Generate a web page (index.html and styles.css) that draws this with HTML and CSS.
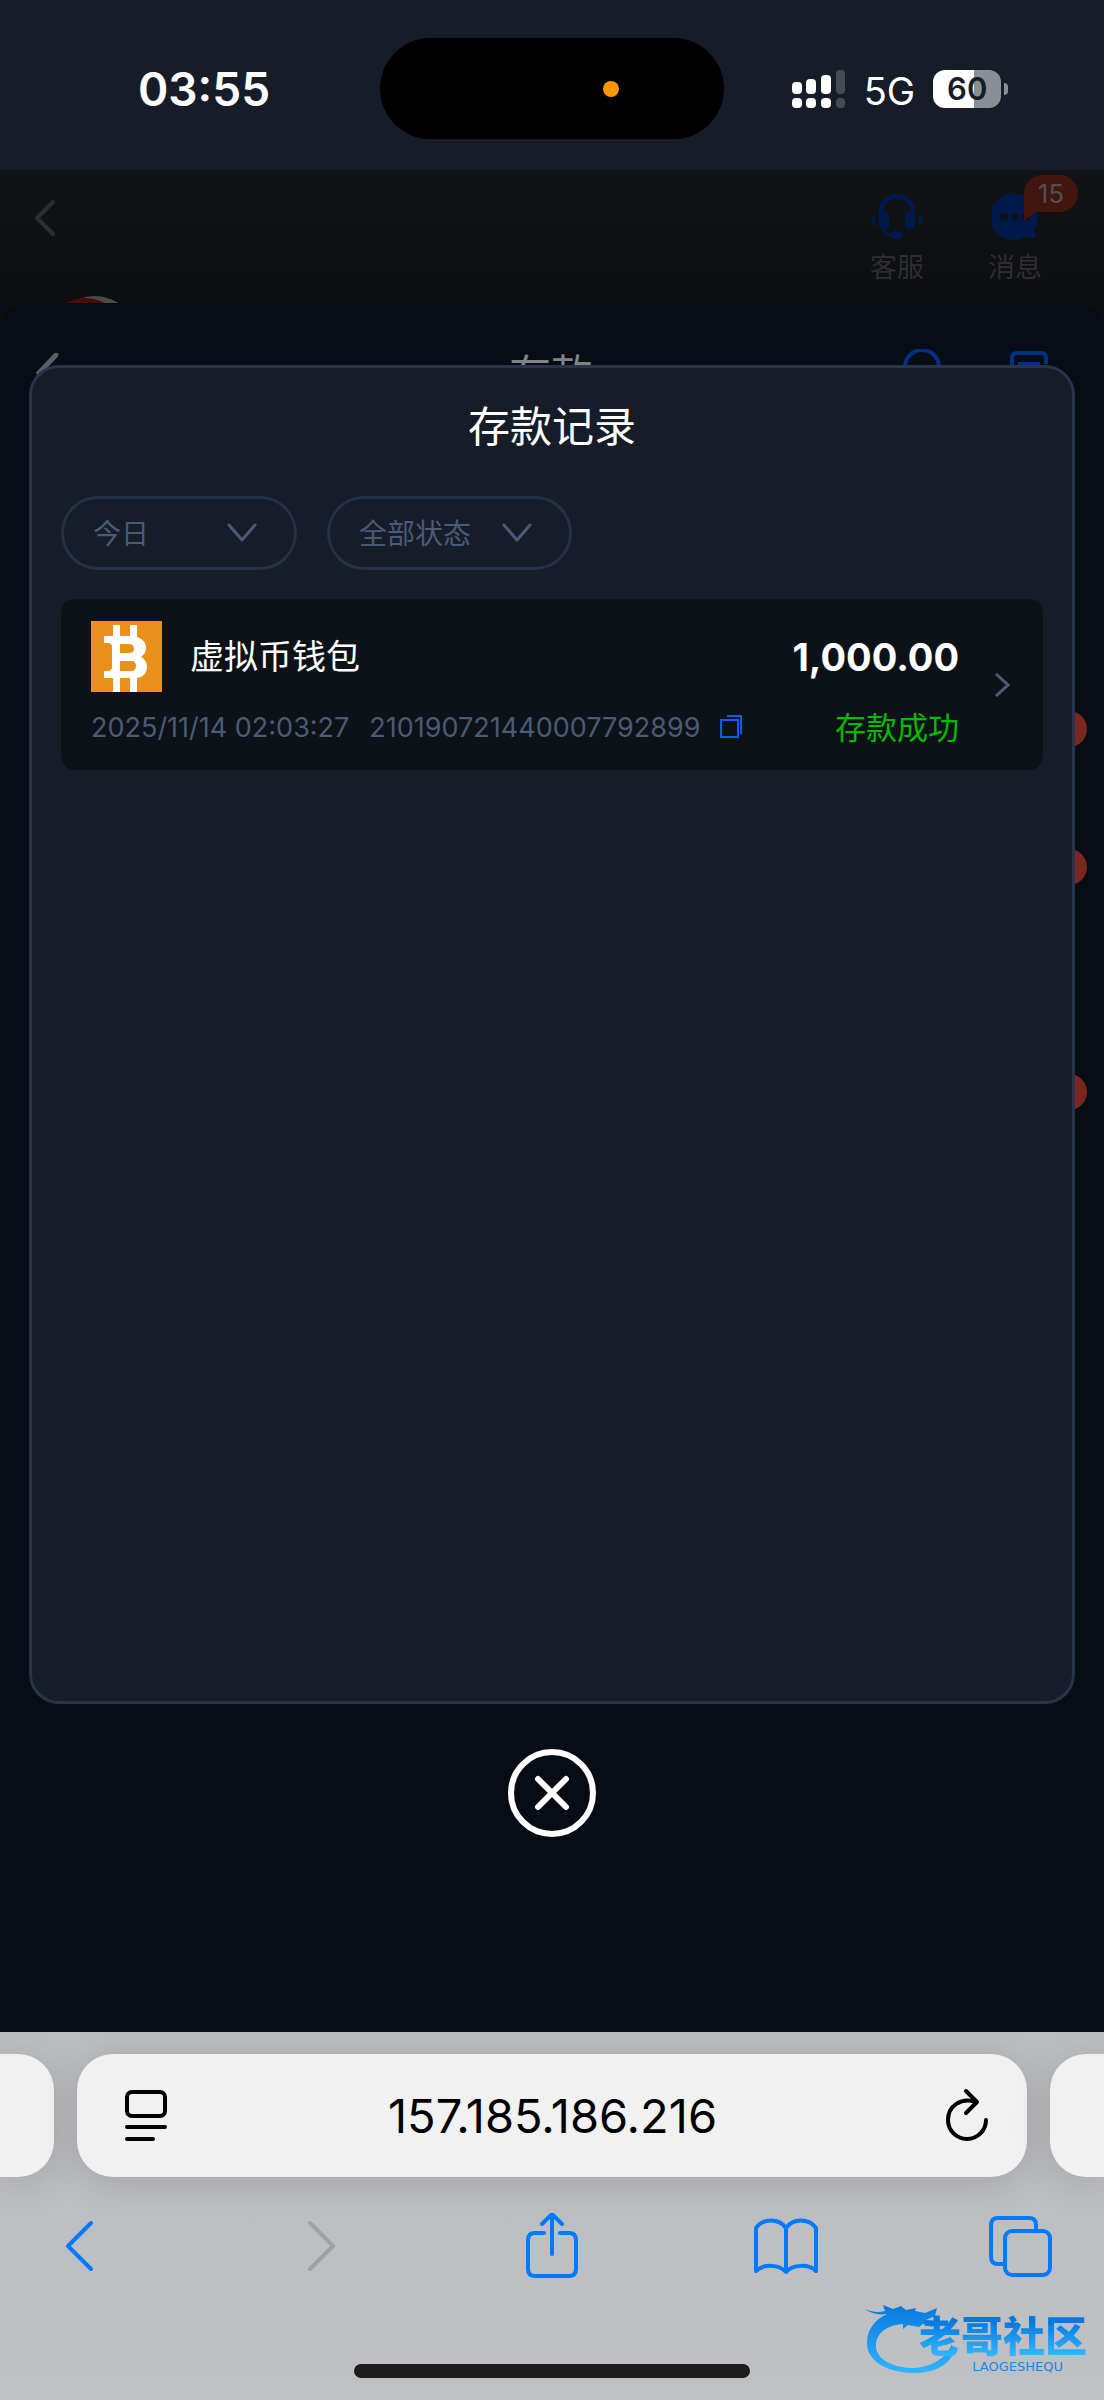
FILE: index.html
```html
<!DOCTYPE html>
<html lang="zh-CN">
<head>
<meta charset="utf-8">
<meta name="viewport" content="width=device-width, initial-scale=1">
<title>存款记录</title>
<link rel="stylesheet" href="styles.css">
</head>
<body>
<header class="status-bar">
  <time class="clock">03:55</time>
  <div class="island"><span class="island-dot"></span></div>
  <div class="status-icons">
    <svg class="signal" viewBox="0 0 54 38" aria-hidden="true">
      <g fill="#fff"><rect x="0" y="12" width="10" height="12" rx="4"/><rect x="14" y="9" width="10" height="15" rx="4"/><rect x="29" y="5" width="10" height="19" rx="4"/><rect x="0" y="28" width="10" height="10" rx="4"/><rect x="14" y="28" width="10" height="10" rx="4"/><rect x="29" y="28" width="10" height="10" rx="4"/></g>
      <g fill="#454a53"><rect x="44" y="0" width="9" height="24" rx="4"/><rect x="44" y="28" width="9" height="10" rx="4"/></g>
    </svg>
    <span class="network">5G</span>
    <span class="battery"><span class="battery-level">60</span><span class="battery-cap"></span></span>
  </div>
</header>

<main class="page">
  <div class="underlay">
    <header class="top-nav">
      <button class="icon-button" aria-label="返回">
        <svg width="22" height="36" viewBox="0 0 22 36"><path d="M19 2 3 18l16 16" fill="none" stroke="#2d2e31" stroke-width="4" stroke-linecap="round" stroke-linejoin="round"/></svg>
      </button>
      <div class="nav-actions">
        <button class="nav-action">
          <svg width="52" height="46" viewBox="0 0 52 46" fill="#001a4d">
            <path d="M10 20v-2a16 16 0 0 1 32 0v2" fill="none" stroke="#001a4d" stroke-width="5"/>
            <rect x="8" y="18" width="10" height="17" rx="3"/><rect x="34" y="18" width="10" height="17" rx="3"/>
            <path d="M4 21v11a6 6 0 0 1 0-11zM48 21v11a6 6 0 0 0 0-11z"/>
            <path d="M12 34c0 5 4 7 9 7" fill="none" stroke="#001a4d" stroke-width="3"/><ellipse cx="26" cy="41" rx="6" ry="4"/>
          </svg>
          <span>客服</span>
        </button>
        <button class="nav-action">
          <svg width="46" height="46" viewBox="0 0 46 46">
            <path d="M23 0a23 23 0 0 1 19 36l2 6q0 3-4 2l-6-2A23 23 0 1 1 23 0z" fill="#001a4d"/>
            <g fill="#0c111a"><circle cx="12" cy="23" r="4"/><circle cx="23" cy="23" r="4"/><circle cx="34" cy="23" r="4"/></g>
          </svg>
          <span>消息</span>
          <span class="nav-badge">15</span>
        </button>
      </div>
      <svg class="avatar" width="84" height="42" viewBox="0 0 84 42" aria-hidden="true"><circle cx="42" cy="42" r="42" fill="#4a4a4b"/><circle cx="32" cy="42" r="40" fill="#4a0b0c"/></svg>
    </header>
    <section class="sheet">
      <header class="sheet-header">
        <button class="icon-button" aria-label="返回">
          <svg width="24" height="44" viewBox="0 0 24 44"><path d="M20 2 3 20l17 20" fill="none" stroke="#5a5e65" stroke-width="5" stroke-linecap="round"/></svg>
        </button>
        <h2 class="sheet-title">存款</h2>
        <div class="sheet-tools">
          <button class="icon-button" aria-label="客服"><svg width="38" height="52" viewBox="0 0 38 52" fill="none" stroke="#003185" stroke-width="4"><path d="M2 36V18a17 17 0 0 1 34 0v18"/></svg></button>
          <button class="icon-button" aria-label="记录"><svg width="38" height="48" viewBox="0 0 38 48" fill="none" stroke="#003185" stroke-width="4"><path d="M2 46V7q0-5 5-5h24q5 0 5 5v6M8 13h22"/></svg></button>
        </div>
      </header>
      <ul class="channels"><li></li><li class="tall"></li><li></li></ul>
    </section>
  </div>

  <div class="overlay">
    <section class="modal" role="dialog" aria-labelledby="modal-title">
      <h1 class="modal-title" id="modal-title">存款记录</h1>
      <div class="filters">
        <div class="filter">
          <select class="filter-select" aria-label="日期"><option>今日</option></select>
          <svg class="filter-arrow" width="30" height="20" viewBox="0 0 30 20"><path d="m2 2 13 15L28 2"/></svg>
        </div>
        <div class="filter filter-status">
          <select class="filter-select" aria-label="状态"><option>全部状态</option></select>
          <svg class="filter-arrow" width="30" height="20" viewBox="0 0 30 20"><path d="m2 2 13 15L28 2"/></svg>
        </div>
      </div>
      <article class="record">
        <div class="record-main">
          <div class="record-row">
            <div class="wallet">
              <svg width="71" height="71" viewBox="0 0 71 71" aria-hidden="true">
                <rect width="71" height="71" fill="#e8901a"/>
                <path fill="#fff" fill-rule="evenodd" d="M22 4h7v11h10V4h7v12c6 2 9 6 9 11 0 4-2 7-5 9 4 2 6 6 6 10 0 6-4 10-10 11v14h-7V57H29v14h-7V57h-9v-7h4q4 0 4-4V26q0-4-4-4h-4v-7h9zM29 23v9h9q5 0 5-4 0-5-5-5zM29 40v10h11q5 0 5-5t-5-5z"/>
              </svg>
              <h3 class="wallet-name">虚拟币钱包</h3>
            </div>
            <strong class="amount">1,000.00</strong>
          </div>
          <div class="record-row">
            <div class="meta">
              <time>2025/11/14 02:03:27</time>
              <span>210190721440007792899</span>
              <button class="icon-button" aria-label="复制"><svg width="22" height="26" viewBox="0 0 22 26" fill="none" stroke="#0a5cff" stroke-width="2"><rect x="1" y="5" width="17" height="17"/><path d="M7 1h14v18"/></svg></button>
            </div>
            <span class="state">存款成功</span>
          </div>
        </div>
        <svg class="record-arrow" width="16" height="24" viewBox="0 0 16 24"><path d="m2 1 12 11L2 23" fill="none" stroke="#4b5a75" stroke-width="3"/></svg>
      </article>
    </section>
    <button class="close" aria-label="关闭"><svg width="88" height="88" viewBox="0 0 88 88" fill="none" stroke="#fff" stroke-width="6" stroke-linecap="round"><circle cx="44" cy="44" r="41"/><path d="m30 30 28 28M58 30 30 58"/></svg></button>
  </div>
</main>

<footer class="browser">
  <div class="address-row">
    <span class="tab-edge tab-edge-left"></span>
    <div class="address">
      <button class="icon-button" aria-label="页面选项"><svg width="42" height="54" viewBox="0 0 42 54" fill="none" stroke="#000" stroke-width="4" stroke-linecap="round"><rect x="2" y="3" width="38" height="24" rx="5"/><path d="M2 38h38M2 50h26"/></svg></button>
      <input class="url" type="text" aria-label="网址" value="157.185.186.216">
      <button class="icon-button" aria-label="刷新"><svg width="42" height="56" viewBox="0 0 42 56" fill="none" stroke="#000" stroke-width="4" stroke-linecap="round" stroke-linejoin="round"><path d="m20 3 11 11-11 11M30 14C15 9 2 18 2 32a19 19 0 0 0 38 0"/></svg></button>
    </div>
    <span class="tab-edge tab-edge-right"></span>
  </div>
  <nav class="toolbar">
    <button class="icon-button" aria-label="后退"><svg width="66" height="66" viewBox="0 0 66 66"><path d="M45 10 22 33l23 23"/></svg></button>
    <button class="icon-button forward" aria-label="前进" disabled><svg width="66" height="66" viewBox="0 0 66 66"><path d="m28 10 23 23-23 23"/></svg></button>
    <button class="icon-button" aria-label="分享"><svg width="66" height="66" viewBox="0 0 66 66"><path d="M27 20h-9q-7 0-7 7v29q0 7 7 7h34q7 0 7-7V27q0-7-7-7h-9M35 41V2M25 11 35 1l10 10"/></svg></button>
    <button class="icon-button" aria-label="书签"><svg width="66" height="66" viewBox="0 0 66 66"><path d="M33 15C26 5 10 5 3 15v43c7-7 23-7 30 1 7-8 23-8 30-1V15C56 5 40 5 33 15zv43"/></svg></button>
    <button class="icon-button" aria-label="标签页"><svg width="66" height="66" viewBox="0 0 66 66"><rect x="17" y="18" width="45" height="44" rx="7"/><path d="M48 18v-6q0-7-7-7H10q-7 0-7 7v32q0 7 7 7h7"/></svg></button>
  </nav>
  <span class="home-indicator"></span>
  <div class="watermark">
    <svg class="dragon" width="94" height="72" viewBox="0 0 94 72" aria-hidden="true">
      <defs><linearGradient id="dragon-fill" x1="0" y1="0" x2="0" y2="1"><stop offset="0" stop-color="#0878de"/><stop offset="1" stop-color="#2eb6ff"/></linearGradient></defs>
      <path fill="url(#dragon-fill)" d="M0 6q10 5 20 2l-2-6 10 4 8-3 5 4 10-2-1 3 10 2 12-5-2 8-9 4 8 1-2 6-9-3-4 3-11-2-5 4v-5C22 22 11 30 11 43c0 13 16 21 34 22 19 0 35-8 42-24v12C81 64 65 71 46 70 20 69 2 57 2 40 2 27 9 17 22 11Q9 13 0 6z"/>
    </svg>
    <div class="brand"><span class="brand-name">老哥社区</span><span class="brand-latin">LAOGESHEQU</span></div>
  </div>
</footer>
</body>
</html>
```

FILE: styles.css
```css
* { box-sizing: border-box; }

body {
  margin: 0;
  min-height: 100vh;
  display: flex;
  flex-direction: column;
  background: #080d14;
  color: #fff;
  font-family: Inter, "Noto Sans CJK SC", sans-serif;
}

h1, h2, h3, ul { margin: 0; padding: 0; font-weight: 400; }
ul { list-style: none; }
svg { display: block; flex: none; }

button, input, select { font: inherit; color: inherit; background: none; border: 0; padding: 0; margin: 0; }
.icon-button { display: flex; align-items: center; justify-content: center; }

/* Status bar */
.status-bar {
  display: grid;
  grid-template-columns: 1fr 344px 1fr;
  align-items: center;
  padding: 38px 0 31px;
  background: #161d28;
}
.clock { padding-left: 28px; text-align: center; font-size: 46px; line-height: 56px; font-weight: 600; }
.island { display: flex; align-items: center; justify-content: flex-end; height: 101px; padding-right: 105px; border-radius: 51px; background: #000; }
.island-dot { width: 16px; height: 16px; border-radius: 50%; background: #ff9500; }
.status-icons { display: flex; align-items: center; justify-content: center; gap: 18px; padding-right: 28px; }
.signal { width: 54px; height: 38px; }
.network { padding-top: 4px; font-size: 38px; line-height: 40px; font-weight: 400; }
.battery { display: flex; align-items: center; gap: 3px; }
.battery-level {
  width: 68px;
  border-radius: 12px;
  background: linear-gradient(90deg, #fff 60%, #8b8e93 60%);
  color: #161d28;
  font-size: 31px;
  line-height: 38px;
  font-weight: 600;
  text-align: center;
}
.battery-cap { width: 4px; height: 12px; border-radius: 0 4px 4px 0; background: #8b8e93; }

/* Page and its dimmed content */
.page { flex: 1; display: grid; }
.underlay, .overlay { grid-area: 1 / 1; display: flex; flex-direction: column; }
.underlay { background: linear-gradient(#121315, #0d0e10 133px); }

.top-nav {
  position: relative;
  display: flex;
  justify-content: space-between;
  align-items: flex-start;
  height: 133px;
  padding: 24px 59px 0 34px;
  overflow: hidden;
}
.top-nav > .icon-button { margin-top: 6px; }
.nav-actions { display: flex; gap: 58px; }
.nav-action {
  display: flex;
  flex-direction: column;
  align-items: center;
  gap: 8px;
  width: 60px;
  color: #2d2e31;
  font-size: 27px;
  line-height: 40px;
}
.nav-badge {
  position: absolute;
  top: 5px;
  right: 26px;
  width: 54px;
  border-radius: 19px 19px 19px 0;
  background: #42160f;
  color: #505052;
  font-size: 26px;
  line-height: 37px;
}
.nav-badge::after {
  content: "";
  position: absolute;
  left: 0;
  top: 36px;
  border-top: 10px solid #42160f;
  border-right: 13px solid transparent;
}
.avatar { position: absolute; left: 53px; top: 126px; }

.sheet { flex: 1; border-radius: 30px 30px 0 0; background: #080d15; }
.sheet-header { display: grid; grid-template-columns: 1fr auto 1fr; align-items: center; height: 144px; padding: 0 56px 0 36px; }
.sheet-header > .icon-button { justify-self: start; }
.sheet-title { color: #808387; font-size: 42px; line-height: 60px; padding-left: 18px; }
.sheet-tools { display: flex; justify-content: flex-end; align-items: center; gap: 69px; }
.channels { padding: 264px 17px 0 0; }
.channels li { display: flex; justify-content: flex-end; height: 138px; }
.channels .tall { height: 225px; }
.channels li::after { content: ""; width: 36px; height: 36px; border-radius: 50%; background: #7b271f; }

/* Deposit history dialog */
.overlay { z-index: 1; align-items: center; padding: 195px 29px; }
.modal {
  flex: 1;
  align-self: stretch;
  padding: 29px;
  border: 3px solid #27344a;
  border-radius: 30px;
  background: #161d28;
}
.modal-title { font-size: 42px; line-height: 60px; text-align: center; }

.filters { display: flex; gap: 30px; margin: 39px 0 29px; }
.filter { position: relative; width: 236px; }
.filter-status { width: 245px; }
.filter-select {
  width: 100%;
  height: 74px;
  padding: 2px 60px 0 29px;
  border: 3px solid #243146;
  border-radius: 37px;
  appearance: none;
  color: #4b5a78;
  font-size: 28px;
}
.filter-arrow { position: absolute; right: 40px; top: 27px; pointer-events: none; fill: none; stroke: #4b5a78; stroke-width: 3; stroke-linecap: round; stroke-linejoin: round; }

.record { display: flex; align-items: center; justify-content: space-between; gap: 35px; padding: 22px 33px 22px 30px; border-radius: 14px; background: #0d1219; }
.record-main { flex: 1; display: flex; flex-direction: column; gap: 16px; }
.record-row { display: flex; align-items: center; justify-content: space-between; }
.wallet { display: flex; align-items: center; gap: 28px; }
.wallet-name { font-size: 34px; line-height: 48px; }
.amount { font-size: 38px; line-height: 48px; font-weight: 700; }
.meta { display: flex; align-items: center; gap: 20px; color: #4b5a75; font-size: 27px; line-height: 40px; }
.state { color: #0b0; font-size: 31px; line-height: 40px; }

.close { margin-top: 45px; }

/* Browser chrome */
.browser {
  position: relative;
  display: flex;
  flex-direction: column;
  padding: 22px 0;
  background: linear-gradient(#bcbdc1, #bfc0c4);
  overflow: hidden;
}
.address-row { display: flex; gap: 23px; }
.tab-edge, .address { background: #f1f1f2; box-shadow: 0 6px 40px rgba(0, 0, 0, .14); }
.tab-edge { flex: none; width: 54px; }
.tab-edge-left { border-radius: 0 36px 36px 0; }
.tab-edge-right { border-radius: 36px 0 0 36px; }
.address { flex: 1; display: flex; align-items: center; height: 123px; padding: 0 39px 0 48px; border-radius: 36px; color: #000; }
.url { flex: 1; min-width: 0; padding-right: 8px; text-align: center; font-size: 47px; line-height: 56px; }

.toolbar { display: flex; justify-content: space-between; padding: 36px 50px 0 46px; }
.toolbar svg { fill: none; stroke: #007aff; stroke-width: 4; stroke-linecap: round; stroke-linejoin: round; }
.toolbar .forward svg { stroke: #a0a1a3; }
.home-indicator { align-self: center; width: 396px; height: 14px; margin-top: 85px; border-radius: 7px; background: #1c1c1c; }

.watermark { position: absolute; right: 17px; bottom: 25px; width: 222px; height: 72px; }
.dragon { position: absolute; left: 0; top: 0; }
.brand { position: absolute; right: 0; top: 12px; display: flex; flex-direction: column; align-items: flex-end; color: #128be8; }
.brand-name {
  background: linear-gradient(#0878de 15%, #2eb6ff 90%);
  background-clip: text;
  color: transparent;
  font-size: 42px;
  line-height: 44px;
  font-weight: 900;
}
.brand-latin { padding-right: 24px; font-family: "DejaVu Sans", sans-serif; font-size: 13px; line-height: 16px; }
```
